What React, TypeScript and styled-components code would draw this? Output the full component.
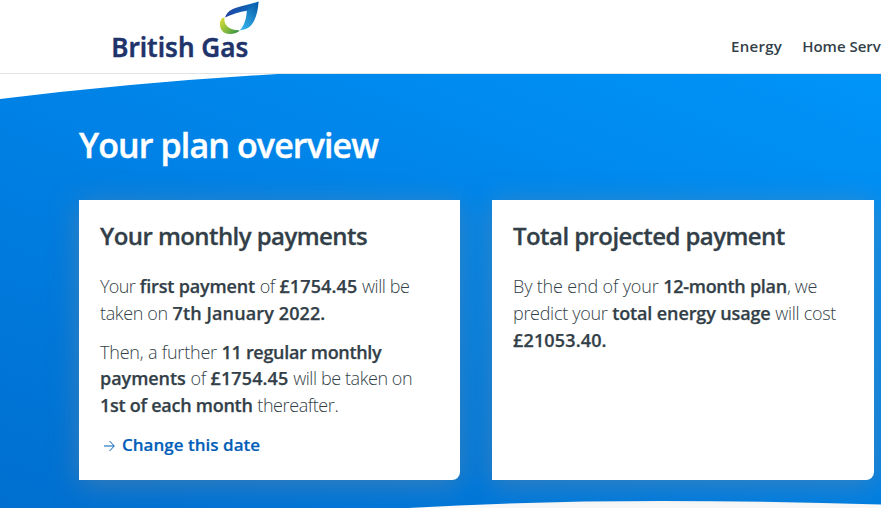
import React from 'react';
import styled, { createGlobalStyle } from 'styled-components';

const GlobalStyle = createGlobalStyle`
  *, *::before, *::after { box-sizing: border-box; }
  html, body { margin: 0; padding: 0; height: 100%; overflow: hidden; }
  body {
    font-family: 'Open Sans', 'Noto Sans', sans-serif;
    color: #333f48;
    background: #fff;
  }
`;

const Page = styled.div`
  height: 508px;
  display: flex;
  flex-direction: column;
  overflow: hidden;
`;

const Header = styled.header`
  height: 74px;
  flex: none;
  display: flex;
  justify-content: space-between;
  border-bottom: 1px solid #e3e4e5;
  padding-left: 110px;
  background: #fff;
`;

const LogoArt = styled.svg`
  display: block;
  width: 152px;
  height: 66px;
`;

const LogoText = styled.text`
  font-family: 'Noto Sans', 'Open Sans', sans-serif;
  font-weight: 600;
  font-size: 27.5px;
  fill: #21336b;
  stroke: #21336b;
  stroke-width: 0.4px;
`;

const Nav = styled.nav`
  display: flex;
  gap: 20px;
  width: 150px;
  padding-top: 36px;
`;

const NavLink = styled.a<{ $track: number }>`
  flex: none;
  font-size: 15px;
  font-weight: 600;
  line-height: 20px;
  letter-spacing: ${(p) => p.$track}px;
  white-space: nowrap;
`;

const Hero = styled.main`
  position: relative;
  flex: 1;
  padding: 49px 7px 0 79px;
  background: linear-gradient(22deg, #006fd0 0%, #0081e5 52%, #0094f9 100%);
`;

const Waves = styled.svg`
  position: absolute;
  inset: 0;
  width: 100%;
  height: 100%;
`;

const Title = styled.h1`
  position: relative;
  margin: 0 0 33px;
  font-size: 34px;
  line-height: 44px;
  font-weight: 600;
  letter-spacing: -0.88px;
  color: #fff;
  -webkit-text-stroke: 0.4px #fff;
`;

const Cards = styled.div`
  position: relative;
  display: grid;
  grid-template-columns: 381px 382px;
  gap: 32px;
`;

const Card = styled.section`
  height: 280px;
  padding: 20px 21px;
  background: #fff;
  border-radius: 0 0 8px 0;
  box-shadow: 0 4px 28px rgba(120, 135, 150, 0.5);
`;

const CardTitle = styled.h2`
  margin: 0 0 21px;
  font-size: 24px;
  line-height: 32px;
  font-weight: 600;
  letter-spacing: -0.56px;
  white-space: nowrap;
  -webkit-text-stroke: 0.3px currentColor;
`;

const Copy = styled.p`
  margin: 0 0 12px;
  font-size: 18px;
  line-height: 26.8px;
  font-weight: 300;
`;

const Line = styled.span`
  display: block;
  white-space: nowrap;
`;

const Run = styled.span<{ $track?: number }>`
  letter-spacing: ${(p) => p.$track ?? 0}px;
`;

const Strong = styled(Run)`
  font-weight: 600;
  -webkit-text-stroke: 0.25px currentColor;
`;

const Action = styled.a`
  display: flex;
  align-items: center;
  gap: 7px;
  padding: 1px 0 0 4px;
  font-size: 17px;
  line-height: 26px;
  font-weight: 600;
  letter-spacing: 0.02px;
  color: #005eb8;
  -webkit-text-stroke: 0.2px currentColor;
`;

const ArrowIcon = styled.svg`
  display: block;
  width: 11px;
  height: 12px;
  margin-top: 2px;
`;

function Logo() {
  return (
    <LogoArt viewBox="0 0 152 66" role="img" aria-label="British Gas">
      <defs>
        <linearGradient id="blade" x1="0" y1="0.35" x2="1" y2="0.65">
          <stop offset="0" stopColor="#293a9c" />
          <stop offset="0.5" stopColor="#135bb0" />
          <stop offset="1" stopColor="#0878c0" />
        </linearGradient>
        <linearGradient id="fold" x1="0.8" y1="0" x2="0.2" y2="1">
          <stop offset="0" stopColor="#075ca8" />
          <stop offset="1" stopColor="#35b3ec" />
        </linearGradient>
        <linearGradient id="leaf" x1="0" y1="0.2" x2="1" y2="1">
          <stop offset="0" stopColor="#d3d936" />
          <stop offset="0.5" stopColor="#82b93e" />
          <stop offset="1" stopColor="#1e8745" />
        </linearGradient>
      </defs>
      <path d="M115 17.5 C117 11.5 121 9.5 127 7.5 C135 5 143 3.5 148.5 1.5 C148 5 147.5 8 146.5 11 L136.8 10.8 C130 11.5 122 14.4 115 17.5Z" fill="url(#blade)" />
      <path d="M136.8 10.8 L148.5 1.5 C148.2 10 146 20 141 25.5 C138 28.7 134 30 129.8 30.2 C134.5 26 136.4 18 136.8 10.8Z" fill="url(#fold)" />
      <path d="M114.4 17.6 C111.5 17.6 110 20.5 110 24.5 C110 30 113.5 34 120 34 C124 34 128 32.7 129.7 30.2 C120 30.6 113.4 26 114.4 17.6Z" fill="url(#leaf)" />
      <LogoText x="1.2" y="57" textLength="137.2" lengthAdjust="spacingAndGlyphs">
        British Gas
      </LogoText>
    </LogoArt>
  );
}

export default function App() {
  return (
    <>
      <GlobalStyle />
      <Page>
        <Header>
          <Logo />
          <Nav>
            <NavLink $track={0.3}>Energy</NavLink>
            <NavLink $track={0}>Home Services</NavLink>
          </Nav>
        </Header>
        <Hero>
          <Waves viewBox="0 0 881 434" preserveAspectRatio="none" aria-hidden="true">
            <path d="M0 0 H278 Q140 8 0 25Z" fill="#fff" />
            <path d="M408 434 Q530 427 662 427 Q775 427 881 430.5 V434Z" fill="#fafafa" />
          </Waves>
          <Title>Your plan overview</Title>
          <Cards>
            <Card>
              <CardTitle>Your monthly payments</CardTitle>
              <Copy>
                <Line>
                  <Run $track={-0.65}>Your</Run> <Strong $track={-0.15}>first payment</Strong>{' '}
                  <Run $track={-0.5}>of</Run> <Strong $track={0.12}>£1754.45</Strong>{' '}
                  <Run $track={-0.45}>will be</Run>
                </Line>
                <Line>
                  <Run $track={-0.35}>taken on</Run> <Strong $track={0.12}>7th January 2022.</Strong>
                </Line>
              </Copy>
              <Copy>
                <Line>
                  <Run $track={-0.2}>Then, a further</Run> <Strong $track={-0.32}>11 regular monthly</Strong>
                </Line>
                <Line>
                  <Strong $track={-0.05}>payments</Strong> <Run $track={-0.3}>of</Run>{' '}
                  <Strong $track={0.12}>£1754.45</Strong> <Run $track={-0.42}>will be taken on</Run>
                </Line>
                <Line>
                  <Strong $track={-0.26}>1st of each month</Strong> <Run $track={-0.42}>thereafter.</Run>
                </Line>
              </Copy>
              <Action>
                <ArrowIcon viewBox="0 0 11 12" fill="none" stroke="#005eb8" strokeWidth="1">
                  <path d="M0 6 H10 M5.5 1 L10.3 6 L5.5 11" />
                </ArrowIcon>
                Change this date
              </Action>
            </Card>
            <Card>
              <CardTitle>Total projected payment</CardTitle>
              <Copy>
                <Line>
                  <Run $track={-0.16}>By the end of your</Run> <Strong $track={-0.28}>12-month plan</Strong>
                  <Run $track={-0.3}>, we</Run>
                </Line>
                <Line>
                  <Run $track={-0.3}>predict your</Run> <Strong $track={-0.12}>total energy usage</Strong>{' '}
                  <Run $track={-0.3}>will cost</Run>
                </Line>
                <Line>
                  <Strong $track={0.15}>£21053.40.</Strong>
                </Line>
              </Copy>
            </Card>
          </Cards>
        </Hero>
      </Page>
    </>
  );
}
